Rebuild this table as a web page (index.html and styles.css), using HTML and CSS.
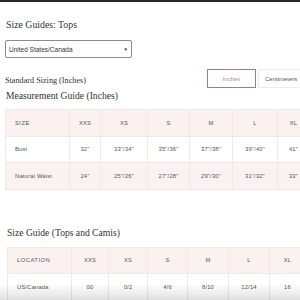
FILE: index.html
```html
<!DOCTYPE html>
<html>
<head>
<meta charset="utf-8">
<link rel="stylesheet" href="styles.css">
</head>
<body>
<div class="topbar"></div>
<div class="page">
  <h1 class="title">Size Guides: Tops</h1>
  <div class="select">
    <span>United States/Canada</span>
    <span class="arrow">&#9660;</span>
  </div>
  <div class="unitrow">
    <div class="std">Standard Sizing (Inches)</div>
    <div class="toggles">
      <div class="btn active">Inches</div>
      <div class="btn cm">Centimeters</div>
    </div>
  </div>
  <h2 class="title mg">Measurement Guide (Inches)</h2>
  <table class="t1">
    <colgroup><col style="width:64px"><col style="width:31px"><col style="width:47px"><col style="width:42px"><col style="width:43px"><col style="width:45px"><col style="width:32px"></colgroup>
    <tr class="pink"><td class="lab up">SIZE</td><td>XXS</td><td>XS</td><td>S</td><td>M</td><td>L</td><td>XL</td></tr>
    <tr><td class="lab">Bust</td><td>32"</td><td>33"/34"</td><td>35"/36"</td><td>37"/38"</td><td>39"/40"</td><td>41"</td></tr>
    <tr class="pink"><td class="lab">Natural Waist</td><td>24"</td><td>25"/26"</td><td>27"/28"</td><td>29"/30"</td><td>31"/32"</td><td>33"</td></tr>
  </table>
  <h2 class="title sg">Size Guide (Tops and Camis)</h2>
  <table class="t2">
    <colgroup><col style="width:64px"><col style="width:37px"><col style="width:39px"><col style="width:40px"><col style="width:41px"><col style="width:41px"><col style="width:36px"></colgroup>
    <tr class="pink"><td class="lab up">LOCATION</td><td>XXS</td><td>XS</td><td>S</td><td>M</td><td>L</td><td>XL</td></tr>
    <tr><td class="lab">US/Canada</td><td>00</td><td>0/2</td><td>4/6</td><td>8/10</td><td>12/14</td><td>16</td></tr>
  </table>
</div>
<div class="fade"></div>
</body>
</html>
```
FILE: styles.css
```css
html, body {
  margin: 0;
  padding: 0;
  overflow: hidden;
  background: #fff;
  width: 300px;
  height: 300px;
}
.topbar {
  height: 2px;
  background: #262626;
}
.page {
  padding-left: 5px;
  font-family: "Liberation Serif", serif;
  color: #333;
}
.title {
  font-family: "Liberation Serif", serif;
  font-weight: normal;
  font-size: 9.6px;
  margin: 0;
  color: #333;
}
h1.title {
  padding-top: 17px;
  padding-left: 1px;
  font-size: 9.8px;
  line-height: 12px;
}
.select {
  margin-top: 9px;
  width: 119px;
  height: 16px;
  border: 1px solid #8a8a8a;
  border-radius: 2px;
  display: flex;
  align-items: center;
  justify-content: space-between;
  padding: 0 3px;
  box-sizing: content-box;
  font-family: "Liberation Sans", sans-serif;
  font-size: 6.5px;
  color: #333;
}
.select .arrow {
  font-size: 4.5px;
  color: #222;
}
.unitrow {
  display: flex;
  align-items: center;
  justify-content: space-between;
  margin-top: 11px;
  height: 19px;
}
.std {
  font-size: 8.2px;
  color: #333;
  padding-top: 3px;
}
.toggles {
  display: flex;
  gap: 2px;
  margin-right: -10px;
}
.btn {
  height: 19px;
  box-sizing: border-box;
  display: flex;
  align-items: center;
  justify-content: center;
  font-family: "Liberation Sans", sans-serif;
  font-size: 6px;
  color: #555;
  border: 1px solid #ececec;
}
.btn.cm {
  width: 52px;
  justify-content: flex-start;
  padding-left: 6px;
}
.btn.active {
  width: 49px;
  border: 1.5px solid #a27a90;
  color: #b58a9c;
}
h2.mg {
  margin-top: 1px;
  padding-left: 1px;
  line-height: 14px;
}
table {
  border-collapse: collapse;
  table-layout: fixed;
  font-family: "Liberation Sans", sans-serif;
  font-size: 5.8px;
  letter-spacing: 0.2px;
  color: #555;
}
.t1 {
  width: 304px;
  margin-top: 6px;
}
.t2 {
  width: 298px;
  margin-top: 7px;
  margin-left: 2px;
}
td {
  border: 1px solid #f2e8e8;
  height: 25.5px;
  padding: 0;
  text-align: center;
}
td.lab {
  text-align: left;
  padding-left: 9px;
}
td.up {
  letter-spacing: 0.5px;
}
tr.pink td {
  background: #fcf1f1;
}
h2.sg {
  margin-top: 36px;
  padding-left: 2px;
  line-height: 14px;
}
.fade {
  position: fixed;
  left: 0;
  right: 0;
  bottom: 0;
  height: 16px;
  background: linear-gradient(to bottom, rgba(0,0,0,0), rgba(0,0,0,0.12));
  pointer-events: none;
}
```
